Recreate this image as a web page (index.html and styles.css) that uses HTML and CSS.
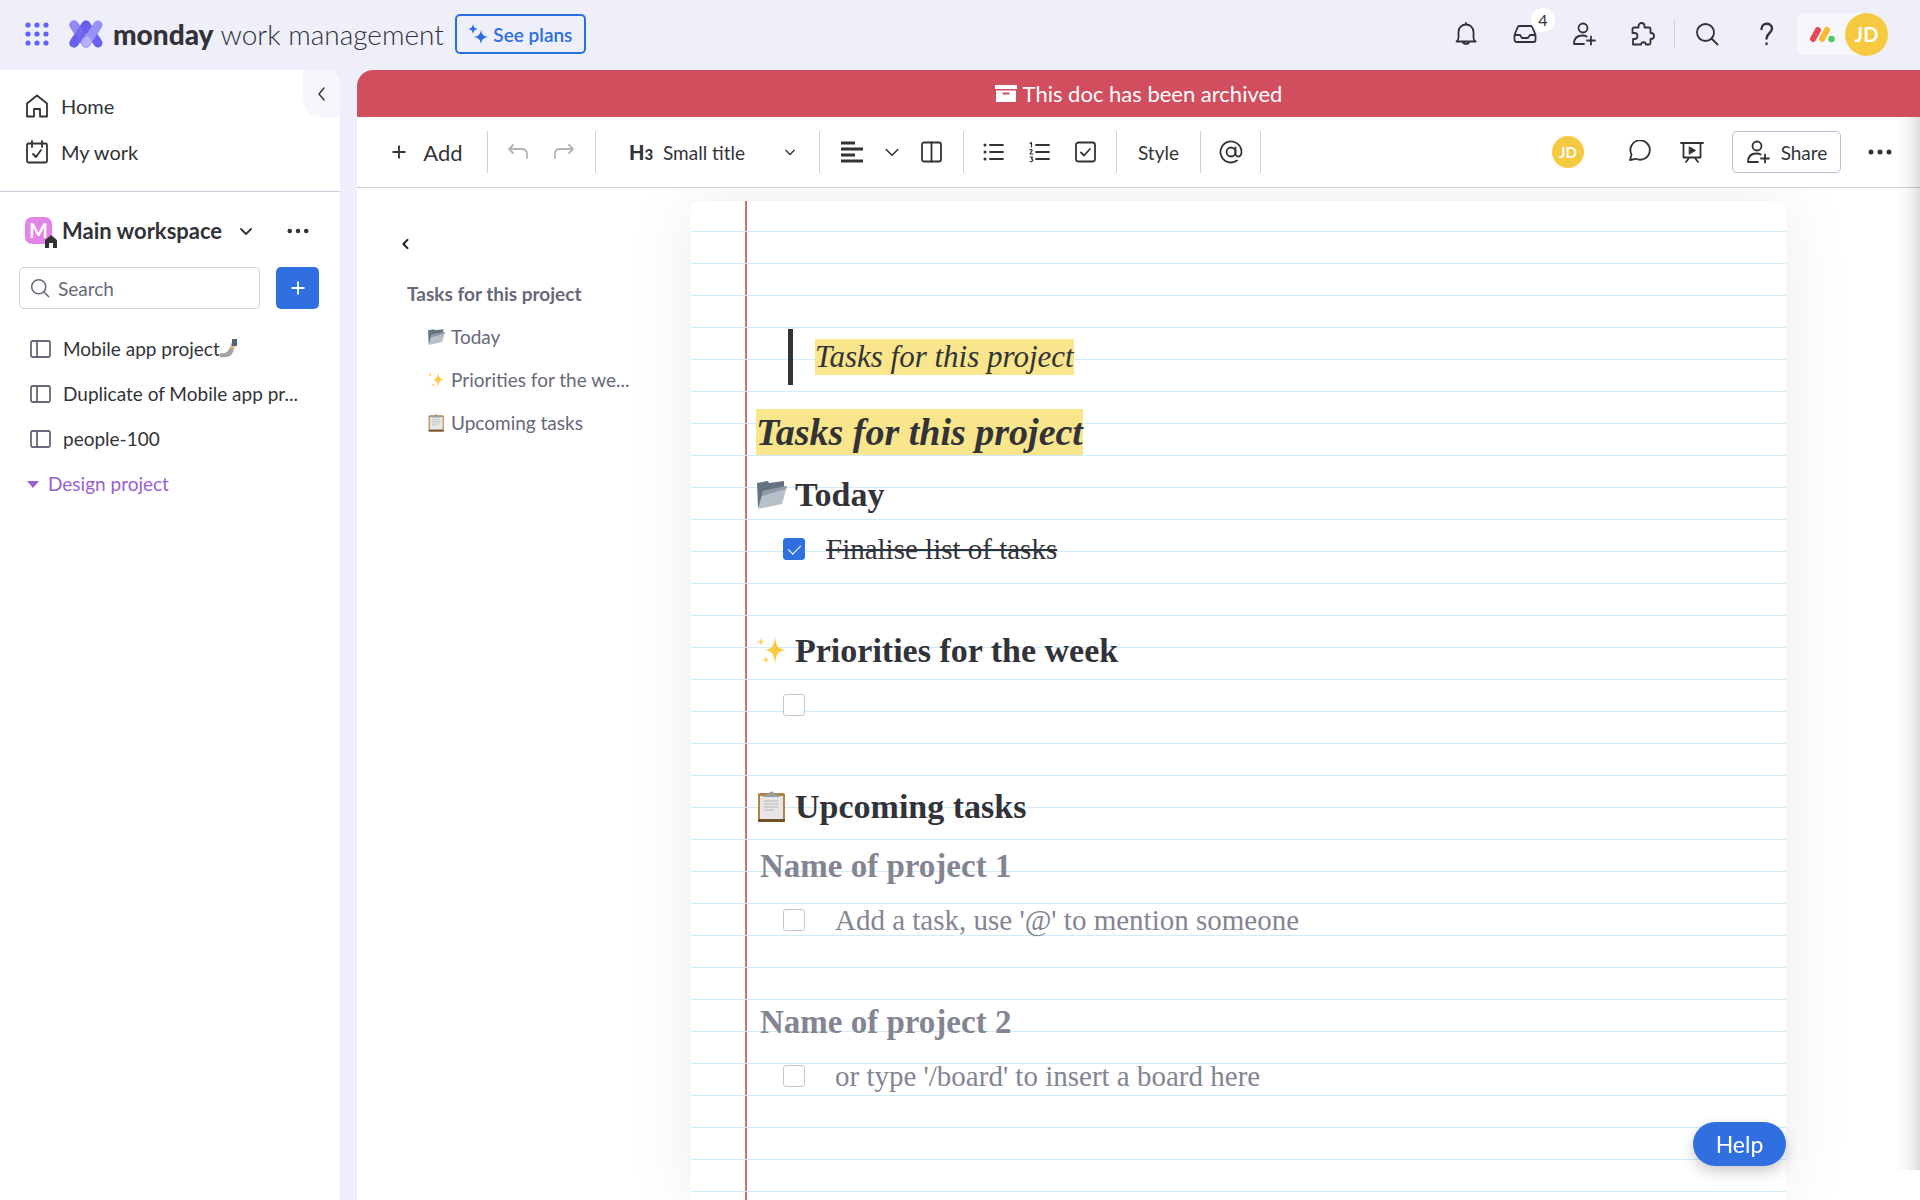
FILE: index.html
```html
<!DOCTYPE html>
<html lang="en">
<head>
    <meta charset="UTF-8">
    <meta name="viewport" content="width=device-width, initial-scale=1.0">
    <title>Tasks for this project</title>
    <link rel="stylesheet" href="styles.css">
</head>
<body>
    <!-- Shared icons -->
    <svg class="sprite" aria-hidden="true">
        <symbol id="chevron-down" viewBox="0 0 24 24"><path d="M7 10l5 5 5-5"/></symbol>
        <symbol id="chevron-left" viewBox="0 0 24 24"><path d="M14 6l-5 6 5 6"/></symbol>
        <symbol id="plus" viewBox="0 0 24 24"><path d="M12 5v14M5 12h14"/></symbol>
        <symbol id="dots" viewBox="0 0 24 24"><g fill="currentColor" stroke="none"><circle cx="3" cy="12" r="2.500"/><circle cx="12" cy="12" r="2.500"/><circle cx="21" cy="12" r="2.500"/></g></symbol>
        <symbol id="search" viewBox="0 0 24 24"><circle cx="10.500" cy="10.500" r="8.500"/><path d="M16.500 16.500l6 6"/></symbol>
        <symbol id="invite" viewBox="0 0 24 24"><circle cx="11" cy="6" r="4.500"/><path d="M12 22H2c0-6 3.500-8.500 8.500-8.500 1.600 0 3 .3 4.200 1M19 14.500v8M15 18.500h8"/></symbol>
        <symbol id="board" viewBox="0 0 24 24"><rect x="2" y="4" width="19" height="16" rx="1.500"/><path d="M8 4v16"/></symbol>
        <symbol id="folder" viewBox="0 0 32 32">
            <path d="M1 4l11-2 1 2 15-2v14L2 28z" fill="#65727f"/>
            <path d="M7 12l24-5-5 18L2 30z" fill="#b7c0c9"/>
            <path d="M7 12l24-5-1 3L6 17z" fill="#8d99a5"/>
        </symbol>
        <symbol id="sparkles" viewBox="0 0 32 32">
            <path d="M19 2c1 9 3 12 11 13-8 1-10 4-11 14-1-10-3-13-10-14 7-1 9-4 10-13z" fill="#fbc940"/>
            <path d="M5 1c0 4 1 5 4 6-3 0-4 2-4 6 0-4-1-6-4-6 3-1 4-2 4-6zM10 19c0 4 1 5 4 6-3 0-4 2-4 5 0-3-1-5-4-5 3-1 4-2 4-6z" fill="#fcd76b"/>
        </symbol>
        <symbol id="clipboard" viewBox="0 0 32 32">
            <rect x="2" y="2" width="27" height="29" rx="2" fill="#b58245"/>
            <path d="M4 5h23v23H4z" fill="#e6e6e6"/>
            <path d="M2 28h27v2a1 1 0 0 1-1 1H3a1 1 0 0 1-1-1z" fill="#74502a"/>
            <path d="M8 10h14M8 13h14M8 16h14M8 19h10" stroke="#c8c8c8" stroke-width="1.500"/>
            <path d="M7 6l3-3h3a2 2 0 1 1 5 0h3l3 3z" fill="#98a0a6"/>
        </symbol>
    </svg>

    <header class="topbar">
        <button class="icon-btn apps" aria-label="Apps">
            <svg viewBox="0 0 24 24" fill="#6161ff"><circle cx="3" cy="3" r="2.600"/><circle cx="12" cy="3" r="2.600"/><circle cx="21" cy="3" r="2.600"/><circle cx="3" cy="12" r="2.600"/><circle cx="12" cy="12" r="2.600"/><circle cx="21" cy="12" r="2.600"/><circle cx="3" cy="21" r="2.600"/><circle cx="12" cy="21" r="2.600"/><circle cx="21" cy="21" r="2.600"/></svg>
        </button>
        <a class="brand" href="#">
            <svg class="brand-mark" viewBox="0 0 34 28" fill="none" stroke-width="9" stroke-linecap="round">
                <path d="M5 23L17 5l12 18" stroke="#6a60ef" stroke-linejoin="round"/>
                <path d="M5 5l12 18" stroke="#7d74f2"/>
                <path d="M5 5l4 6" stroke="#928bf6"/>
                <path d="M17 23L29 5" stroke="#9690f7"/>
                <path d="M17 22l1-1" stroke="#b7b2f8"/>
                <path d="M5 23L17 5" stroke="#6a60ef" opacity=".7"/>
            </svg>
            <span class="brand-name"><b>monday</b> work management</span>
        </a>
        <button class="plans">
            <svg viewBox="0 0 20 20" fill="#2b6fe0"><path d="M5 0c.7 3.300 1.500 4.200 5 5-3.500.8-4.300 1.700-5 5-.7-3.300-1.500-4.200-5-5 3.500-.8 4.300-1.700 5-5zM13 6c1 4.800 2.300 6 7 7-4.700 1-6 2.200-7 7-1-4.800-2.300-6-7-7 4.700-1 6-2.200 7-7z"/></svg>
            See plans
        </button>
        <nav class="top-actions">
            <button class="icon-btn" aria-label="Notifications">
                <svg class="icon" viewBox="0 0 24 24"><path d="M2.500 19.500h19c-1.500-1-2-2-2-4V10a7.500 7.500 0 0 0-15 0v5.500c0 2-.5 3-2 4zM12 2.500V1M9 20c.5 2.500 5.500 2.500 6 0"/></svg>
            </button>
            <button class="icon-btn" aria-label="Inbox">
                <svg class="icon" viewBox="0 0 24 24"><path d="M1.500 13l3-7.500C4.800 4.600 5.500 4 6.500 4h11c1 0 1.700.6 2 1.500l3 7.500v5c0 1-1 2-2 2h-17c-1 0-2-1-2-2zM1.500 13H7l2 3h6l2-3h5.500"/></svg>
                <span class="count">4</span>
            </button>
            <button class="icon-btn" aria-label="Invite members"><svg class="icon"><use href="#invite"/></svg></button>
            <button class="icon-btn" aria-label="Installed apps">
                <svg class="icon" viewBox="0 0 24 24"><path d="M2 22.500V17h1.500a2.500 2.500 0 0 0 0-6H1.500V7c0-1 .6-1.500 1.500-1.500H7.500V4a3 3 0 0 1 6 0v1.500H18c1 0 1.500.6 1.500 1.500v4h.5a3 3 0 0 1 0 6h-.5v4c0 1-.6 1.500-1.500 1.500h-3c-.5-3-4.500-3-5 0z"/></svg>
            </button>
            <span class="top-sep"></span>
            <button class="icon-btn wide" aria-label="Search"><svg class="icon"><use href="#search"/></svg></button>
            <button class="icon-btn wide" aria-label="Help">
                <svg class="icon thick" viewBox="0 0 24 24"><path d="M6.500 7c0-7 10.500-7 10.500-.5 0 5-5.500 4.500-5.500 10"/><path d="M11.500 21.500v.5"/></svg>
            </button>
            <button class="account" aria-label="Account">
                <svg viewBox="0 0 26 18" stroke-width="6" stroke-linecap="round"><path d="M4 14l5-9" stroke="#e8485c"/><path d="M13 14l5-9" stroke="#f8bd2f"/><circle cx="22.500" cy="14" r="3.200" fill="#4ecb63"/></svg>
                <span class="avatar">JD</span>
            </button>
        </nav>
    </header>

    <div class="shell">
        <aside class="sidebar">
            <button class="collapse" aria-label="Collapse"><svg class="icon thin"><use href="#chevron-left"/></svg></button>
            <nav class="main-nav">
                <a href="#"><svg class="icon" viewBox="0 0 24 24"><path d="M2 22.500V9.500L12 1.500l10 8v13h-7V15H9v7.500z"/></svg>Home</a>
                <a href="#"><svg class="icon" viewBox="0 0 24 24"><rect x="2" y="3.500" width="20" height="19" rx="1.500"/><path d="M7 1v6M17 1v6M8 14l3 3 5-7"/></svg>My work</a>
            </nav>
            <div class="workspace">
                <span class="ws-icon">M
                    <svg viewBox="0 0 14 14"><path d="M1 14V6l6-5 6 5v8H9V9H5v5z" fill="#323338"/></svg>
                </span>
                <button class="ws-name">Main workspace <svg class="icon"><use href="#chevron-down"/></svg></button>
                <button class="ws-more" aria-label="More"><svg class="icon"><use href="#dots"/></svg></button>
            </div>
            <div class="find">
                <label class="find-box">
                    <svg class="icon"><use href="#search"/></svg>
                    <input type="text" placeholder="Search" aria-label="Search">
                </label>
                <button class="add-item" aria-label="Add item"><svg class="icon"><use href="#plus"/></svg></button>
            </div>
            <nav class="boards">
                <a href="#"><svg class="icon"><use href="#board"/></svg><span>Mobile app project</span>
                    <svg class="selfie" viewBox="0 0 18 20"><path d="M0 14c6 1 8-1 10-6l4 1c-1 7-4 10-14 9z" fill="#a3a3a3"/><path d="M10 9l1-5 4 1-1 6z" fill="#e2b77b"/><path d="M12 0h5v7h-5z" fill="#4f6580"/></svg>
                </a>
                <a href="#"><svg class="icon"><use href="#board"/></svg><span>Duplicate of Mobile app pr...</span></a>
                <a href="#"><svg class="icon"><use href="#board"/></svg><span>people-100</span></a>
                <a class="folder" href="#"><svg viewBox="0 0 12 8"><path d="M0 1h12L6 8z" fill="#9a5fd0"/></svg><span>Design project</span></a>
            </nav>
        </aside>

        <main class="main">
            <div class="banner">
                <svg viewBox="0 0 22 18" fill="#fff"><path d="M0 0h22v4H0z"/><path fill-rule="evenodd" d="M1 5.500h20V17H1zM7.500 7.500v2h7v-2z"/></svg>
                This doc has been archived
            </div>

            <div class="toolbar">
                <div class="group add"><button><svg class="icon"><use href="#plus"/></svg>Add</button></div>
                <div class="group history">
                    <button aria-label="Undo"><svg class="icon" viewBox="0 0 24 24"><path d="M6 5L2 9l4 4M2 9h13c4 0 5 2 5 5v4"/></svg></button>
                    <button aria-label="Redo"><svg class="icon" viewBox="0 0 24 24"><path d="M17 5l4 4-4 4M21 9H8c-4 0-5 2-5 5v4"/></svg></button>
                </div>
                <div class="group type">
                    <label for="textType">H<small>3</small></label>
                    <select id="textType"><option>Small title</option></select>
                    <svg class="icon"><use href="#chevron-down"/></svg>
                </div>
                <div class="group align">
                    <button aria-label="Align"><svg class="icon heavy" viewBox="0 0 24 24"><path d="M1 3h14M1 9h22M1 15h14M1 21h22"/></svg></button>
                    <button aria-label="More alignments"><svg class="icon big-chevron" viewBox="0 0 24 24"><path d="M5 9l7 7 7-7"/></svg></button>
                    <button aria-label="Columns"><svg class="icon" viewBox="0 0 24 24"><rect x="2" y="2.500" width="19" height="19" rx="2"/><path d="M11.500 2.500v19"/></svg></button>
                </div>
                <div class="group lists">
                    <button aria-label="Bulleted list"><svg class="icon" viewBox="0 0 24 24"><path d="M8 5h13M8 12h13M8 19h13"/><path d="M3 5h.01M3 12h.01M3 19h.01" stroke-width="3"/></svg></button>
                    <button aria-label="Numbered list"><svg class="icon" viewBox="0 0 24 24"><path d="M8 5h13M8 12h13M8 19h13"/><path d="M2 3.500l1.500-1V7M2 10c1-1 2.500-.3 2 .8L2 14h3M2 17h2.500L3.500 19c2 0 2 3-1.500 2.500" stroke-width="1.200"/></svg></button>
                    <button aria-label="Checklist"><svg class="icon" viewBox="0 0 24 24"><rect x="2" y="2.500" width="19" height="19" rx="2.500"/><path d="M7 12.500l3 3 6-6.500"/></svg></button>
                </div>
                <div class="group style"><button>Style</button></div>
                <div class="group mention">
                    <button aria-label="Mention"><svg class="icon" viewBox="0 0 24 24"><circle cx="12" cy="12" r="4.500"/><path d="M16.500 7.500v6c0 4.500 6 4 6-1.500a10.500 10.500 0 1 0-4.500 8.600"/></svg></button>
                </div>
                <div class="doc-actions">
                    <span class="avatar small">JD</span>
                    <button class="comment" aria-label="Comments"><svg class="icon" viewBox="0 0 24 24"><path d="M2 20l1.500-5.500A9.700 9.700 0 1 1 8 18.800z"/></svg></button>
                    <button class="present" aria-label="Present"><svg class="icon" viewBox="0 0 24 24"><path d="M1 3h22M3.500 3v14.500h17V3M9 18l-3 4M15 18l3 4"/><path d="M9.500 7l6 3.500-6 3.500z" fill="currentColor" stroke-width="1"/></svg></button>
                    <button class="share"><svg class="icon"><use href="#invite"/></svg>Share</button>
                    <button class="more" aria-label="More"><svg class="icon"><use href="#dots"/></svg></button>
                </div>
            </div>

            <div class="doc">
                <nav class="toc">
                    <button aria-label="Hide outline"><svg class="icon thick" viewBox="0 0 24 24"><path d="M15 7l-5 5 5 5"/></svg></button>
                    <a class="toc-title" href="#tasks">Tasks for this project</a>
                    <a href="#today"><svg><use href="#folder"/></svg>Today</a>
                    <a href="#priorities"><svg><use href="#sparkles"/></svg>Priorities for the we...</a>
                    <a href="#upcoming"><svg><use href="#clipboard"/></svg>Upcoming tasks</a>
                </nav>

                <article class="paper">
                    <blockquote><mark>Tasks for this project</mark></blockquote>
                    <h1 id="tasks"><mark>Tasks for this project</mark></h1>

                    <h2 id="today"><svg><use href="#folder"/></svg>Today</h2>
                    <label class="task done"><input type="checkbox" checked><span>Finalise list of tasks</span></label>
                    <p class="blank"></p>

                    <h2 id="priorities"><svg><use href="#sparkles"/></svg>Priorities for the week</h2>
                    <label class="task"><input type="checkbox" aria-label="Empty task"></label>
                    <p class="blank"></p>

                    <h2 id="upcoming"><svg><use href="#clipboard"/></svg>Upcoming tasks</h2>
                    <h2 class="hint">Name of project 1</h2>
                    <label class="task hint"><input type="checkbox"><span>Add a task, use '@' to mention someone</span></label>
                    <p class="blank"></p>

                    <h2 class="hint">Name of project 2</h2>
                    <label class="task hint"><input type="checkbox"><span>or type '/board' to insert a board here</span></label>
                </article>
            </div>
        </main>
    </div>

    <button class="help">Help</button>
</body>
</html>
```

FILE: styles.css
```css
* {
    box-sizing: border-box;
}
body {
    margin: 0;
    min-height: 100vh;
    display: flex;
    flex-direction: column;
    background: #eeeff8;
    color: #323338;
    font-family: Lato, "Liberation Sans", sans-serif;
    font-size: 18px;
}
button, input, select {
    font: inherit;
    color: inherit;
}
button {
    padding: 0;
    border: none;
    background: none;
    cursor: pointer;
    display: flex;
    align-items: center;
    justify-content: center;
}
a {
    color: inherit;
    text-decoration: none;
}
svg {
    flex-shrink: 0;
}
.sprite {
    display: none;
}
.icon {
    width: 24px;
    height: 24px;
    fill: none;
    stroke: currentColor;
    stroke-width: 1.8;
    stroke-linecap: round;
    stroke-linejoin: round;
}
.thin {
    stroke-width: 1.4;
}
.thick {
    stroke-width: 2.4;
}
.heavy {
    stroke-width: 3;
    stroke-linecap: butt;
}

/* Top bar */
.topbar {
    height: 70px;
    padding: 0 32px 2px 25px;
    display: flex;
    align-items: center;
}
.apps svg {
    width: 24px;
    height: 24px;
}
.brand {
    display: flex;
    align-items: center;
    margin-left: 20px;
}
.brand-mark {
    width: 34px;
    height: 28px;
}
.brand-name {
    margin-left: 10px;
    font-size: 28px;
    font-weight: 300;
    white-space: nowrap;
}
.brand-name b {
    font-weight: 900;
}
.plans {
    width: 131px;
    height: 40px;
    margin-left: 11px;
    gap: 5px;
    border: 2px solid #2b6fe0;
    border-radius: 5px;
    color: #2b6fe0;
    font-size: 19px;
    font-weight: 600;
}
.plans svg {
    width: 20px;
    height: 20px;
}
.top-actions {
    margin-left: auto;
    display: flex;
    align-items: center;
}
.top-actions .icon-btn {
    position: relative;
    width: 59px;
    height: 40px;
}
.top-actions .wide {
    width: 60px;
}
.count {
    position: absolute;
    left: 36px;
    top: -6px;
    width: 24px;
    height: 24px;
    border-radius: 50%;
    background: #fff;
    font-size: 16px;
    line-height: 24px;
}
.top-sep {
    width: 1px;
    height: 30px;
    margin: 0 2px;
    background: #ccd1e0;
}
.account {
    height: 42px;
    padding-left: 12px;
    gap: 10px;
    border-radius: 5px 21px 21px 5px;
    background: #f6f7fc;
}
.account svg {
    width: 26px;
    height: 18px;
}
.avatar {
    width: 43px;
    height: 43px;
    border-radius: 50%;
    background: #f6ca40;
    color: #fff;
    font-size: 20px;
    font-weight: bold;
    line-height: 43px;
    text-align: center;
}
.avatar.small {
    width: 32px;
    height: 32px;
    font-size: 15px;
    line-height: 32px;
}

.shell {
    flex: 1;
    display: flex;
    gap: 17px;
}

/* Sidebar */
.sidebar {
    position: relative;
    width: 340px;
    flex-shrink: 0;
    background: #fff;
    border-top-right-radius: 12px;
}
.collapse {
    position: absolute;
    right: 0;
    top: 0;
    width: 37px;
    height: 47px;
    border-radius: 0 12px 0 16px;
    background: #f6f7fb;
}
.main-nav {
    padding: 13px 25px 16px;
    border-bottom: 1px solid #cbccdd;
}
.main-nav a {
    height: 46px;
    display: flex;
    align-items: center;
    gap: 12px;
    font-size: 20px;
}
.workspace {
    height: 77px;
    padding: 0 31px 0 25px;
    display: flex;
    align-items: center;
}
.ws-icon {
    position: relative;
    width: 27px;
    height: 27px;
    border-radius: 7px;
    background: #e484e9;
    color: #fff;
    font-size: 20px;
    font-weight: bold;
    line-height: 27px;
    text-align: center;
}
.ws-icon svg {
    position: absolute;
    right: -6px;
    bottom: -4px;
    width: 14px;
    height: 14px;
}
.ws-name {
    margin-left: 10px;
    gap: 12px;
    font-size: 22px;
    font-weight: bold;
}
.ws-more {
    margin-left: auto;
}
.ws-more .icon {
    width: 22px;
}
.find {
    margin-top: -2px;
    padding: 0 21px 0 19px;
    display: flex;
    justify-content: space-between;
}
.find-box {
    width: 241px;
    height: 42px;
    padding: 0 10px;
    display: flex;
    align-items: center;
    gap: 8px;
    border: 1px solid #cbccdd;
    border-radius: 5px;
    color: #676879;
}
.find-box .icon {
    width: 20px;
    height: 20px;
}
.find-box input {
    width: 100%;
    padding: 0;
    border: none;
    outline: none;
    background: none;
    font-size: 19px;
}
.find-box input::placeholder {
    color: #676879;
    opacity: 1;
}
.add-item {
    width: 43px;
    height: 42px;
    border-radius: 5px;
    background: #2f6fe0;
    color: #fff;
}
.add-item .icon {
    width: 20px;
    height: 20px;
    stroke-width: 2.2;
}
.boards {
    padding: 17px 20px 0 29px;
}
.boards a {
    height: 45px;
    display: flex;
    align-items: center;
    font-size: 19px;
    white-space: nowrap;
}
.boards .icon {
    margin-right: 10px;
    color: #676879;
}
.boards .selfie {
    width: 18px;
    height: 20px;
}
.boards .folder {
    margin-left: -2px;
    gap: 9px;
    color: #9a5fd0;
}
.folder svg {
    width: 12px;
    height: 8px;
}

/* Document area */
.main {
    position: relative;
    flex: 1;
    min-width: 0;
    display: flex;
    flex-direction: column;
    background: #fff;
    border-top-left-radius: 16px;
    overflow: hidden;
}
.main::after {
    content: "";
    position: absolute;
    top: 47px;
    right: 0;
    bottom: 30px;
    width: 26px;
    background: linear-gradient(to left, rgba(0, 0, 0, 0.13), rgba(0, 0, 0, 0.03) 50%, rgba(0, 0, 0, 0));
    pointer-events: none;
}
.banner {
    height: 47px;
    display: flex;
    align-items: center;
    justify-content: center;
    gap: 6px;
    background: #d14e5f;
    color: #fff;
    font-size: 22px;
}
.banner svg {
    width: 22px;
    height: 18px;
}
.toolbar {
    height: 71px;
    display: flex;
    align-items: center;
    border-bottom: 1px solid #cbccdd;
}
.group {
    height: 42px;
    display: flex;
    align-items: center;
    justify-content: center;
    border-right: 1px solid #cfd1df;
    white-space: nowrap;
}
.add {
    width: 131px;
    padding-left: 8px;
}
.add button {
    gap: 14px;
    font-size: 22px;
}
.add .icon {
    width: 20px;
    height: 20px;
    stroke-width: 2.2;
}
.history {
    width: 108px;
    gap: 21px;
    color: #b3b4ba;
}
.type {
    width: 224px;
    padding: 0 17px 0 33px;
    justify-content: flex-start;
}
.type label {
    width: 34px;
    font-size: 20px;
    font-weight: 900;
}
.type small {
    font-size: 15px;
}
.type select {
    flex: 1;
    padding: 0;
    border: none;
    outline: none;
    background: none;
    appearance: none;
    font-size: 19px;
}
.type .icon {
    padding: 2px;
    stroke-width: 1.6;
    pointer-events: none;
}
.align {
    width: 144px;
    gap: 16px;
}
.big-chevron {
    width: 20px;
    margin: 0 2px;
}
.lists {
    width: 153px;
    gap: 22px;
}
.style {
    width: 84px;
    font-size: 19px;
}
.mention {
    width: 60px;
}
.doc-actions {
    margin-left: auto;
    padding-right: 28px;
    display: flex;
    align-items: center;
}
.comment {
    margin-left: 44px;
}
.present {
    margin-left: 28px;
}
.share {
    width: 109px;
    height: 42px;
    margin: 0 27px 0 28px;
    gap: 11px;
    border: 1px solid #b9bbd0;
    border-radius: 5px;
    font-size: 19px;
}
.doc {
    flex: 1;
    display: flex;
    padding: 13px 134px 0 0;
    overflow: hidden;
}

/* Outline */
.toc {
    width: 334px;
    flex-shrink: 0;
    padding: 31px 50px 0;
    color: #676879;
}
.toc button {
    margin: 0 0 16px -12px;
    color: #222;
}
.toc .icon {
    width: 20px;
    height: 24px;
}
.toc a {
    height: 43px;
    padding-left: 20px;
    display: flex;
    align-items: center;
    gap: 5px;
    font-size: 19px;
    white-space: nowrap;
}
.toc .toc-title {
    padding-left: 0;
    font-weight: bold;
}
.toc a svg {
    width: 19px;
    height: 18px;
}

/* Ruled paper */
.paper {
    flex: 1;
    min-width: 0;
    padding: 128px 65px 60px;
    border-radius: 10px 10px 0 0;
    background:
        repeating-linear-gradient(transparent 0 30px, #d0ecfa 30px 31px, transparent 31px 32px),
        linear-gradient(#cf6f6b, #cf6f6b) 54px 0 / 2px 100% no-repeat,
        #fff;
    box-shadow: 0 0 70px rgba(0, 0, 0, 0.08);
    font-family: "Liberation Serif", serif;
    font-size: 29px;
}
mark {
    display: inline-block;
    background: #f9e58c;
    color: #323338;
}
blockquote {
    height: 56px;
    margin: 0 0 24px 32px;
    padding: 10px 22px;
    border-left: 5px solid #323338;
    font-size: 31px;
    font-style: italic;
    line-height: 36px;
}
h1 {
    margin: 0;
    font-size: 38px;
    font-style: italic;
    line-height: 46px;
    height: 46px;
}
h2 {
    height: 40px;
    margin: 20px 0 18px;
    display: flex;
    align-items: center;
    gap: 7px;
    font-size: 34px;
    line-height: 40px;
}
h2 svg {
    width: 32px;
    height: 32px;
}
h2 + h2 {
    margin-top: 19px;
}
.task {
    height: 32px;
    padding-left: 27px;
    display: flex;
    align-items: center;
    gap: 21px;
}
.task input {
    width: 22px;
    height: 22px;
    margin: 0;
    appearance: none;
    border: 1px solid #c3c5d4;
    border-radius: 3px;
    background: #fff;
}
.task input:checked {
    border-color: #2f6fe0;
    background: #2f6fe0;
    display: grid;
    place-items: center;
}
.task input:checked::after {
    content: "";
    width: 6px;
    height: 11px;
    margin-bottom: 3px;
    border: solid #fff;
    border-width: 0 1px 1px 0;
    transform: rotate(45deg);
}
.done span {
    text-decoration: line-through;
    text-decoration-thickness: 2px;
}
.hint {
    color: #838592;
}
h2.hint {
    padding-left: 4px;
    font-size: 33px;
}
.task.hint {
    gap: 30px;
}
.blank {
    height: 46px;
    margin: 0;
}

.help {
    position: fixed;
    right: 134px;
    bottom: 34px;
    width: 93px;
    height: 44px;
    border-radius: 22px;
    background: #2f6fe0;
    box-shadow: 0 6px 14px rgba(0, 0, 0, 0.2);
    color: #fff;
    font-size: 23px;
}
```
